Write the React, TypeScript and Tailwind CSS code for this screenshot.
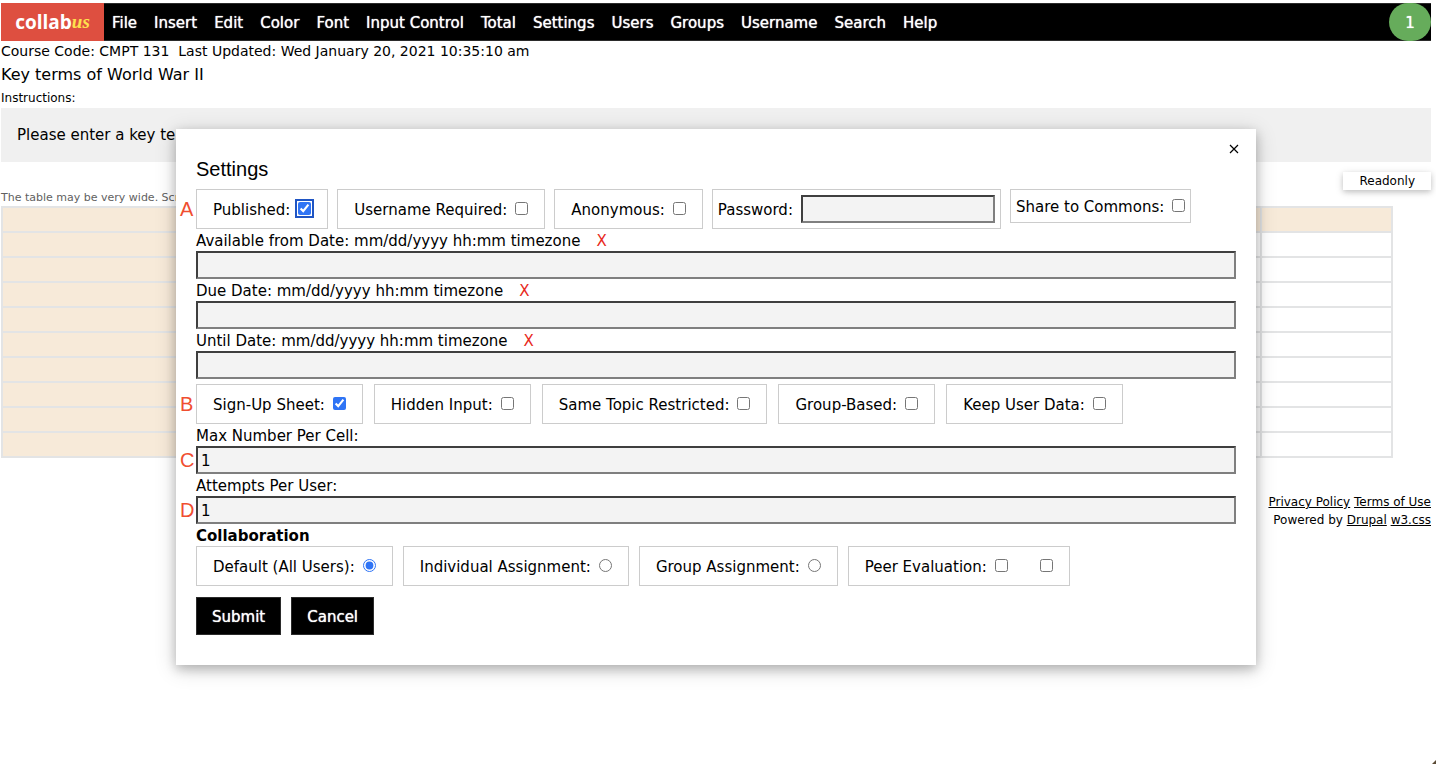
import { useState } from 'react';
import type { ReactNode } from 'react';
import { clsx } from 'clsx';

const menu = [
  'File',
  'Insert',
  'Edit',
  'Color',
  'Font',
  'Input Control',
  'Total',
  'Settings',
  'Users',
  'Groups',
  'Username',
  'Search',
  'Help',
];

const dateFields = ['Available from Date:', 'Due Date:', 'Until Date:'];

const publishOptions = [
  { name: 'Published:', checked: true, focused: true },
  { name: 'Username Required:', checked: false },
  { name: 'Anonymous:', checked: false },
];

const sheetOptions = [
  { name: 'Sign-Up Sheet:', checked: true },
  { name: 'Hidden Input:', checked: false },
  { name: 'Same Topic Restricted:', checked: false },
  { name: 'Group-Based:', checked: false },
  { name: 'Keep User Data:', checked: false },
];

const collaboration = ['Default (All Users):', 'Individual Assignment:', 'Group Assignment:'];

const tableRows = Array.from({ length: 10 }, (_, i) => i);

const box = 'flex items-center border border-[#ccc] pt-0.5';
const check = 'm-0 mb-1 size-[13px] shrink-0 accent-[#2f74f5]';
const caption = 'block pt-0.5 leading-5';
const field =
  'block h-7 w-full border-2 border-t-[#3f3f3f] border-l-[#3f3f3f] border-r-[#7f7f7f] border-b-[#7f7f7f] bg-[#f3f3f3] px-[3px] pt-0.5 outline-none';
const button =
  'h-[38px] cursor-pointer border border-[#2b2b2b] bg-black px-[15px] pt-0.5 text-white text-shadow-[0_0_1px_#fff]';

function Marker({ children }: { children: ReactNode }) {
  return (
    <span
      className="absolute top-1/2 -left-4 -translate-y-1/2 text-[20px] leading-6 text-[#f04e30]"
      style={{ fontFamily: '"Liberation Sans", Arial, sans-serif' }}
    >
      {children}
    </span>
  );
}

function CheckBox({ name, checked, focused }: { name: string; checked: boolean; focused?: boolean }) {
  return (
    <label className={clsx(box, 'h-10 gap-2 px-4')}>
      {name}
      <input
        type="checkbox"
        defaultChecked={checked}
        className={clsx(check, focused && 'rounded-[2px] outline-2 outline-offset-1 outline-[#1f55c4]')}
      />
    </label>
  );
}

function SettingsDialog({ onClose }: { onClose: () => void }) {
  return (
    <div
      role="dialog"
      aria-label="Settings"
      className="relative w-full max-w-[1080px] bg-white px-5 pt-[25px] pb-[30px] shadow-[0_4px_10px_rgba(0,0,0,0.2),0_4px_20px_rgba(0,0,0,0.19)]"
    >
      <button
        type="button"
        aria-label="Close"
        onClick={onClose}
        className="absolute top-2.5 right-3 flex size-5 cursor-pointer items-center justify-center"
      >
        <svg viewBox="0 0 12 12" className="size-3" stroke="#000" strokeWidth="1.2">
          <path d="M2 2l8 8M10 2l-8 8" />
        </svg>
      </button>

      <h2
        className="mb-[5px] text-[20px] leading-[30px]"
        style={{ fontFamily: '"Liberation Sans", Arial, sans-serif' }}
      >
        Settings
      </h2>

      <form onSubmit={(e) => e.preventDefault()}>
        <div className="relative flex flex-wrap items-start gap-[9px]">
          <Marker>A</Marker>
          {publishOptions.map((opt) => (
            <CheckBox key={opt.name} {...opt} />
          ))}
          <label className="flex h-10 items-center gap-2 border border-[#ccc] px-[5px]">
            <span className="pt-0.5">Password:</span>
            <input type="password" className={clsx(field, 'w-[194px]!')} />
          </label>
          <label className={clsx(box, 'h-[34px] gap-2 px-[5px]')}>
            Share to Commons:
            <input type="checkbox" className={check} />
          </label>
        </div>

        {dateFields.map((name, i) => (
          <div key={name}>
            <div className="flex gap-4">
              <label htmlFor={`date-${i}`} className={caption}>
                {name} mm/dd/yyyy hh:mm timezone
              </label>
              <button
                type="button"
                aria-label={`Clear ${name}`}
                className={clsx(caption, 'cursor-pointer text-[#e8291c]')}
              >
                X
              </button>
            </div>
            <input id={`date-${i}`} type="text" className={field} />
          </div>
        ))}

        <div className="relative mt-[5px] flex flex-wrap gap-[11px]">
          <Marker>B</Marker>
          {sheetOptions.map((opt) => (
            <CheckBox key={opt.name} {...opt} />
          ))}
        </div>

        <label htmlFor="max-per-cell" className={caption}>
          Max Number Per Cell:
        </label>
        <div className="relative">
          <Marker>C</Marker>
          <input id="max-per-cell" type="text" defaultValue="1" className={field} />
        </div>
        <label htmlFor="attempts" className={caption}>
          Attempts Per User:
        </label>
        <div className="relative">
          <Marker>D</Marker>
          <input id="attempts" type="text" defaultValue="1" className={field} />
        </div>

        <h3 className={clsx(caption, 'font-bold')}>Collaboration</h3>
        <div className="flex flex-wrap gap-2.5">
          {collaboration.map((name, i) => (
            <label key={name} className={clsx(box, 'h-10 gap-2 px-4')}>
              {name}
              <input type="radio" name="collaboration" defaultChecked={i === 0} className={check} />
            </label>
          ))}
          <div className={clsx(box, 'h-10 gap-8 px-4')}>
            <label className="flex items-center gap-2">
              Peer Evaluation:
              <input type="checkbox" className={check} />
            </label>
            <input type="checkbox" aria-label="Peer Evaluation option" className={check} />
          </div>
        </div>

        <div className="mt-[11px] flex gap-2.5">
          <button type="submit" className={button}>
            Submit
          </button>
          <button type="button" onClick={onClose} className={button}>
            Cancel
          </button>
        </div>
      </form>
    </div>
  );
}

export default function App() {
  const [open, setOpen] = useState(true);

  return (
    <div
      className="relative min-h-screen bg-white pt-[3px] pr-[5px] pl-px text-[15px] leading-[22px] text-black"
      style={{ fontFamily: 'Verdana, "DejaVu Sans", sans-serif' }}
    >
      <nav className="flex h-[38px] items-stretch border-y border-[#2b2b2b] bg-black text-white">
        <a
          href="#home"
          className="-my-px flex w-[103px] shrink-0 items-center justify-center bg-[#de4f40] text-[19px] font-bold"
          style={{ fontFamily: '"Open Sans", sans-serif' }}
        >
          collab
          <span className="text-[#ffe14d] italic" style={{ fontFamily: '"Liberation Serif", serif' }}>
            us
          </span>
        </a>
        <div className="flex gap-px">
          {menu.map((item) => (
            <button
              key={item}
              type="button"
              className="cursor-pointer px-2 pt-0.5 whitespace-nowrap text-shadow-[0_0_1px_#fff]"
            >
              {item}
            </button>
          ))}
        </div>
        <span className="-my-px ml-auto flex w-[42px] items-center justify-center rounded-full bg-[#66ac5b] pt-0.5 text-shadow-[0_0_1px_#fff]">
          1
        </span>
      </nav>

      <p className="text-[14px] leading-5 whitespace-pre">
        Course Code: CMPT 131{'  '}Last Updated: Wed January 20, 2021 10:35:10 am
      </p>
      <h1 className="text-[16px] leading-7">Key terms of World War II</h1>
      <p className="text-[12px] leading-[19px]">Instructions:</p>
      <div className="bg-[#f0f0f0] p-4">Please enter a key te</div>

      <div className="flex justify-end pt-2.5">
        <button
          type="button"
          className="h-[18px] cursor-pointer bg-white px-4 text-[12px] leading-[18px] shadow-[0_2px_5px_rgba(0,0,0,0.16),0_2px_10px_rgba(0,0,0,0.12)]"
        >
          Readonly
        </button>
      </div>

      <div className="mr-[38px]">
        <p className="text-[11px] leading-4 text-[#616161]">The table may be very wide. Scr</p>
        <table className="w-full table-fixed border-collapse">
          <colgroup>
            <col className="w-1/4" />
            <col />
            <col />
            <col className="w-[131px]" />
          </colgroup>
          <tbody>
            {tableRows.map((row) => (
              <tr key={row} className="h-[25px]">
                {[0, 1, 2, 3].map((col) => (
                  <td
                    key={col}
                    className={clsx('border-2 border-[#e3e4e5]', (row === 0 || col === 0) && 'bg-[#f7ead9]')}
                  />
                ))}
              </tr>
            ))}
          </tbody>
        </table>
      </div>

      <footer className="mt-[35px] text-right text-[12px] leading-[18px]">
        <p>
          <a href="#privacy" className="underline">
            Privacy Policy
          </a>{' '}
          <a href="#terms" className="underline">
            Terms of Use
          </a>
        </p>
        <p>
          Powered by{' '}
          <a href="#drupal" className="underline">
            Drupal
          </a>{' '}
          <a href="#w3css" className="underline">
            w3.css
          </a>
        </p>
      </footer>

      {open && (
        <div className="absolute inset-x-0 top-[129px] flex justify-center pr-[5px] pl-px">
          <SettingsDialog onClose={() => setOpen(false)} />
        </div>
      )}

      <svg viewBox="0 0 4 4" className="absolute right-0 bottom-0 size-1" fill="#5a4a35">
        <path d="M4 0v4H0z" />
      </svg>
    </div>
  );
}
